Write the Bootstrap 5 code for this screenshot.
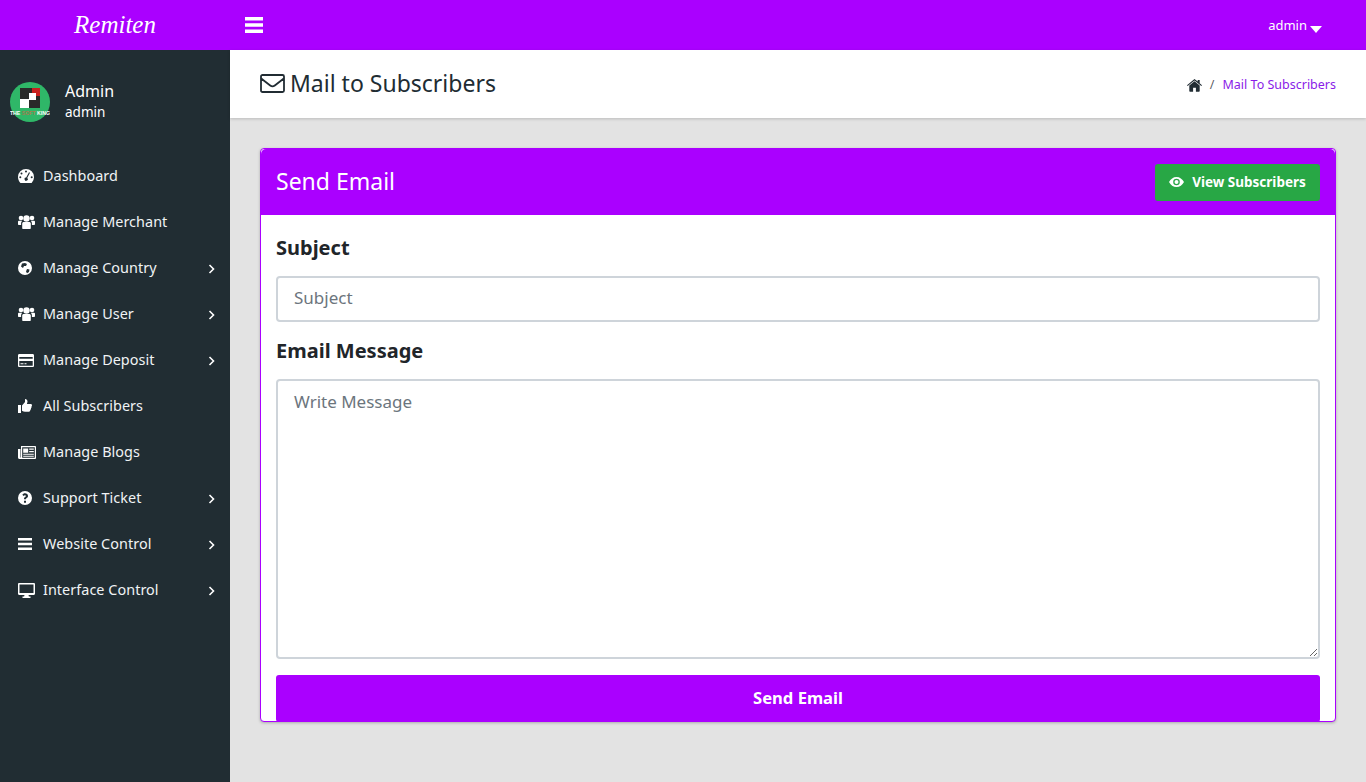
<!DOCTYPE html>
<html lang="en">
<head>
<meta charset="utf-8">
<title>Mail to Subscribers</title>
<link href="https://cdn.jsdelivr.net/npm/bootstrap@5.3.0/dist/css/bootstrap.min.css" rel="stylesheet">
<style>
html,body{height:100%}
body{font-family:"Noto Sans","Open Sans","Liberation Sans",sans-serif;background:#e3e3e3;color:#212529;overflow:hidden}
.topbar{height:50px;background:#a0f;color:#fff}
.brand-cell{width:230px;height:50px}
.brand-text{font-family:"Liberation Serif",serif;font-style:italic;font-weight:400;font-size:25px;color:#fff;line-height:50px}
.burger{margin-left:15px;width:18px;height:16px}
.top-user{font-size:13px;padding-right:44px;color:#fff}
.top-user svg{margin-left:3px;margin-top:9px}
.top-name{margin-left:1px;padding-top:1px}
.main-row{height:732px}
.side{width:230px;background:#212d33;color:#fff;flex:none}
.profile{height:80px;padding:32px 0 0 10px;gap:15px}
.avatar{width:40px;height:40px;flex:none}
.pname{font-size:16px;line-height:20px;margin-top:-1px}
.prole{font-size:13.5px;line-height:20px;margin-top:1px}
.side-menu{margin-top:23px}
.side-item{height:46px;padding:0 15px 0 18px;color:#f0f3f5;font-size:14.4px;letter-spacing:.05px;text-decoration:none}
.side-item:hover{color:#fff}
.side-ico{width:25px;flex:none;display:flex;align-items:center}
.side-arrow{margin-top:2px}
.content{min-width:0}
.page-head{height:68px;background:#fff;box-shadow:0 1px 3px rgba(0,0,0,.18);padding:0 30px}
.page-title{font-size:23px;font-weight:400;line-height:1;color:#212c33;margin:0 0 2px;gap:5px}
.crumbs{font-size:12.5px;margin:2px 0 0}
.crumbs .breadcrumb-item a{color:#8a1be8;text-decoration:none}
.crumbs .breadcrumb-item+.breadcrumb-item{padding-left:8px}
.crumbs .breadcrumb-item+.breadcrumb-item::before{padding-right:8px}
.mail-card{margin:30px 30px 0;height:574px;border:1px solid #a0f;border-radius:4px;box-shadow:0 1px 3px rgba(0,0,0,.25)}
.mail-head{flex:none;height:66px;background:#a0f;color:#fff;padding:0 15px;border:0;border-radius:3px 3px 0 0}
.mail-head h4{font-size:23px;font-weight:400;margin:0}
.view-btn{height:37px;width:165px;font-size:13.5px;font-weight:700;background:#28a745;border:0;border-radius:3px;padding:0;gap:8px;color:#fff}
.mail-body{flex:none;padding:16px 15px 0}
.fld-label{font-size:20px;font-weight:700;line-height:32px;padding-top:1px;margin:0 0 12px;color:#212529;display:block}
.fld-input{height:46px;border:2px solid #ced4da;border-radius:4px;font-size:17px;padding:0 16px 3px;margin-bottom:12px}
.fld-area{height:280px;border:2px solid #ced4da;border-radius:4px;font-size:17px;padding:8px 16px;margin-bottom:16px}
.fld-input::placeholder,.fld-area::placeholder{color:#6c757d}
.send-btn{height:47px;background:#a0f;border:0;border-radius:3px;color:#fff;font-weight:700;font-size:16.6px}
.send-btn:hover,.send-btn:active{background:#a0f;color:#fff}
</style>
</head>
<body>
<header class="topbar d-flex align-items-center">
  <div class="brand-cell text-center"><span class="brand-text">Remiten</span></div>
  <svg class="burger" viewBox="0 0 18 16" aria-hidden="true"><path fill="#fff" d="M0 0h18v3.4H0zM0 6.300h18v3.400H0zM0 12.600h18V16H0z"/></svg>
  <div class="top-user ms-auto d-flex align-items-center"><span class="top-name">admin</span><svg width="12" height="7" viewBox="0 0 12 7"><path fill="#fff" d="M0 0h12L6 7z"/></svg></div>
</header>
<div class="main-row d-flex">
  <aside class="side">
    <div class="profile d-flex">
      <svg class="avatar" viewBox="0 0 40 40" aria-hidden="true">
        <circle cx="20" cy="20" r="20" fill="#2fb768"/>
        <rect x="10" y="6" width="20" height="20" fill="#2a2a2a"/>
        <rect x="22" y="6" width="8" height="8" fill="#c9201f"/>
        <rect x="19" y="11" width="7" height="7" fill="#fff"/>
        <rect x="10" y="17" width="9" height="9" fill="#fff"/>
        <text x="20" y="33" text-anchor="middle" font-size="5.200" font-weight="700" fill="#fff" font-family="Liberation Sans">THE <tspan fill="#a8794f">SOFT</tspan> KING</text>
      </svg>
      <div>
        <div class="pname">Admin</div>
        <div class="prole">admin</div>
      </div>
    </div>
    <nav class="side-menu">
      <a class="side-item d-flex align-items-center" href="#"><span class="side-ico"><svg width="16" height="14" viewBox="0 0 16 14"><path fill="#fff" fill-rule="evenodd" d="M8 0a8 8 0 0 0-8 8c0 2.200.8 4.200 2.200 5.700.2.200.4.300.6.300h10.400c.2 0 .4-.1.600-.3A8 8 0 0 0 16 8a8 8 0 0 0-8-8zM8 1.600a1 1 0 1 1 0 2 1 1 0 0 1 0-2zM3.500 3.500a1 1 0 1 1 0 2 1 1 0 0 1 0-2zM2.300 7.300a1 1 0 1 1 0 2 1 1 0 0 1 0-2zM13.700 7.300a1 1 0 1 1 0 2 1 1 0 0 1 0-2zM12 3.700 9.200 9a1.600 1.600 0 1 1-1-.4L11 3.300z"/></svg></span>Dashboard</a>
      <a class="side-item d-flex align-items-center" href="#"><span class="side-ico"><svg width="17" height="14" viewBox="0 0 17 14"><use href="#ico-users"/></svg></span>Manage Merchant</a>
      <a class="side-item d-flex align-items-center" href="#"><span class="side-ico"><svg width="14" height="14" viewBox="0 0 14 14"><path fill="#fff" fill-rule="evenodd" d="M7 0a7 7 0 1 0 0 14A7 7 0 0 0 7 0zM4 2.500 7 2l2 1-1 2H6L5 7 3 5.500zM9 8l2.500.5L11 11l-2 1.200-1-1.700z"/></svg></span>Manage Country<svg class="ms-auto side-arrow" width="7" height="10" viewBox="0 0 7 10"><path fill="none" stroke="#fff" stroke-width="1.600" d="M1.500 1l4 4-4 4"/></svg></a>
      <a class="side-item d-flex align-items-center" href="#"><span class="side-ico"><svg width="17" height="14" viewBox="0 0 17 14"><use href="#ico-users"/></svg></span>Manage User<svg class="ms-auto side-arrow" width="7" height="10" viewBox="0 0 7 10"><path fill="none" stroke="#fff" stroke-width="1.600" d="M1.500 1l4 4-4 4"/></svg></a>
      <a class="side-item d-flex align-items-center" href="#"><span class="side-ico"><svg width="16" height="13" viewBox="0 0 16 13"><path fill="#fff" fill-rule="evenodd" d="M1.300 0h13.400C15.400 0 16 .6 16 1.300v10.400c0 .7-.6 1.300-1.300 1.300H1.300C.6 13 0 12.400 0 11.700V1.300C0 .6.600 0 1.300 0zM1.300 3v1.800h13.400V3zM1.300 7v4.700h13.400V7zM2.500 9.300h3v1h-3zM6.500 9.300h2v1h-2z"/></svg></span>Manage Deposit<svg class="ms-auto side-arrow" width="7" height="10" viewBox="0 0 7 10"><path fill="none" stroke="#fff" stroke-width="1.600" d="M1.500 1l4 4-4 4"/></svg></a>
      <a class="side-item d-flex align-items-center" href="#"><span class="side-ico"><svg width="14" height="14" viewBox="0 0 14 14"><path fill="#fff" d="M0 6h3v8H0zM4 6.500 7 3V0c1.500 0 2.500 1 2.500 2.500 0 .8-.3 1.800-.6 2.500h3.800c.8 0 1.300.6 1.300 1.300 0 .5-.2.900-.5 1.200.2.700 0 1.300-.5 1.700.1.700-.1 1.300-.7 1.700 0 1.100-.7 1.800-2 1.800H7c-1 0-2-.4-3-1z"/></svg></span>All Subscribers</a>
      <a class="side-item d-flex align-items-center" href="#"><span class="side-ico"><svg width="18" height="13" viewBox="0 0 18 13"><path fill="#fff" fill-rule="evenodd" d="M3 0h14.200c.4 0 .8.400.8.800v11.400c0 .4-.4.800-.8.800H1.500C.7 13 0 12.300 0 11.500V3h2.500v8.500H3zM4.200 1.200v10.600h12.600V1.200zM5.200 2.500h5v4.200h-5zM11.200 2.500h4.600v1.200h-4.600zM11.200 5h4.600v1.200h-4.600zM5.200 7.700h10.600v1H5.200zM5.200 9.700h10.600v1H5.200z"/></svg></span>Manage Blogs</a>
      <a class="side-item d-flex align-items-center" href="#"><span class="side-ico"><svg width="14" height="14" viewBox="0 0 14 14"><path fill="#fff" fill-rule="evenodd" d="M7 0a7 7 0 1 0 0 14A7 7 0 0 0 7 0zM6 9.800h2v2H6zM7 2.300c1.700 0 3 1 3 2.600 0 1.100-.6 1.600-1.300 2.100-.5.300-.7.500-.7 1v.3H6v-.5c0-1 .5-1.500 1.100-1.900.5-.3.800-.5.800-.9 0-.4-.4-.7-.9-.7-.6 0-1 .3-1.400.8L4.300 3.800C5 2.900 5.800 2.300 7 2.300z"/></svg></span>Support Ticket<svg class="ms-auto side-arrow" width="7" height="10" viewBox="0 0 7 10"><path fill="none" stroke="#fff" stroke-width="1.600" d="M1.500 1l4 4-4 4"/></svg></a>
      <a class="side-item d-flex align-items-center" href="#"><span class="side-ico"><svg width="14" height="12" viewBox="0 0 14 12"><path fill="#fff" d="M0 0h14v2.500H0zM0 4.700h14v2.500H0zM0 9.400h14V12H0z"/></svg></span>Website Control<svg class="ms-auto side-arrow" width="7" height="10" viewBox="0 0 7 10"><path fill="none" stroke="#fff" stroke-width="1.600" d="M1.500 1l4 4-4 4"/></svg></a>
      <a class="side-item d-flex align-items-center" href="#"><span class="side-ico"><svg width="17" height="15" viewBox="0 0 17 15"><path fill="#fff" fill-rule="evenodd" d="M1.200 0h14.600c.7 0 1.200.5 1.200 1.200v9.600c0 .7-.5 1.200-1.200 1.200H10.500l.4 1.500h1.600V15h-8v-1.500h1.600l.4-1.500H1.200C.5 12 0 11.500 0 10.800V1.200C0 .5.500 0 1.200 0zM1.500 1.500v8.500h14V1.500z"/></svg></span>Interface Control<svg class="ms-auto side-arrow" width="7" height="10" viewBox="0 0 7 10"><path fill="none" stroke="#fff" stroke-width="1.600" d="M1.500 1l4 4-4 4"/></svg></a>
    </nav>
  </aside>
  <main class="content flex-grow-1">
    <div class="page-head d-flex align-items-center justify-content-between">
      <h1 class="page-title d-flex align-items-center"><svg width="25" height="19" viewBox="0 0 25 19"><path fill="none" stroke="#212c33" stroke-width="1.800" d="M2.500 1h20c.8 0 1.500.7 1.500 1.500v14c0 .8-.7 1.500-1.500 1.500h-20c-.8 0-1.500-.7-1.500-1.500v-14C1 1.700 1.700 1 2.500 1zM1.200 4.500l9 7c1.400 1.100 3.200 1.100 4.600 0l9-7"/></svg>Mail to Subscribers</h1>
      <ol class="breadcrumb crumbs align-items-center">
        <li class="breadcrumb-item d-flex align-items-center"><svg width="15" height="13" viewBox="0 0 15 13"><path fill="#212c33" d="M7.500 2.300 2.300 6.600V12c0 .4.300.7.700.7h3.100V8.800h2.800v3.900H12c.4 0 .7-.3.700-.7V6.600zM15 6.200 12.700 4.300V.9h-2v1.700L7.500 0 0 6.200l.7.800 6.800-5.600L14.300 7z"/></svg></li>
        <li class="breadcrumb-item"><a href="#">Mail To Subscribers</a></li>
      </ol>
    </div>
    <div class="card mail-card">
      <div class="card-header mail-head d-flex align-items-center justify-content-between">
        <h4>Send Email</h4>
        <a href="#" class="btn view-btn d-flex align-items-center justify-content-center"><svg width="15" height="10" viewBox="0 0 15 10"><path fill="#fff" fill-rule="evenodd" d="M7.500 0C4.300 0 1.600 2 0 5c1.600 3 4.300 5 7.500 5S13.400 8 15 5c-1.600-3-4.300-5-7.500-5zM7.500 1.700a3.300 3.300 0 1 1 0 6.600 3.300 3.300 0 0 1 0-6.600zM7.500 3a2 2 0 1 0 0 4 2 2 0 0 0 0-4z"/></svg>View Subscribers</a>
      </div>
      <form class="card-body mail-body">
        <label class="fld-label" for="subj">Subject</label>
        <input id="subj" class="form-control fld-input" type="text" placeholder="Subject">
        <label class="fld-label" for="msg">Email Message</label>
        <textarea id="msg" class="form-control fld-area" placeholder="Write Message"></textarea>
        <button type="button" class="btn send-btn w-100">Send Email</button>
      </form>
    </div>
  </main>
</div>
<svg width="0" height="0" class="position-absolute"><defs><g id="ico-users"><circle cx="8.500" cy="3.500" r="3.200" fill="#fff"/><circle cx="3" cy="3" r="2.300" fill="#fff"/><circle cx="14" cy="3" r="2.300" fill="#fff"/><path fill="#fff" d="M4.200 8.500C4.200 7.500 5 7 6 7h5c1 0 1.800.5 1.800 1.500V13c0 .6-.4 1-1 1H5.200c-.6 0-1-.4-1-1zM0 6.800C0 6 .6 5.700 1.300 5.700h2c.3 0 .6.100.8.300-.7.500-1 1.200-1 2.200V10H1C.4 10 0 9.600 0 9zM17 6.800c0-.8-.6-1.100-1.300-1.100h-2c-.3 0-.6.100-.8.300.7.500 1 1.200 1 2.200V10h2c.6 0 1.100-.4 1.100-1z"/></g></defs></svg>
<script src="https://cdn.jsdelivr.net/npm/bootstrap@5.3.0/dist/js/bootstrap.bundle.min.js"></script>
</body>
</html>
